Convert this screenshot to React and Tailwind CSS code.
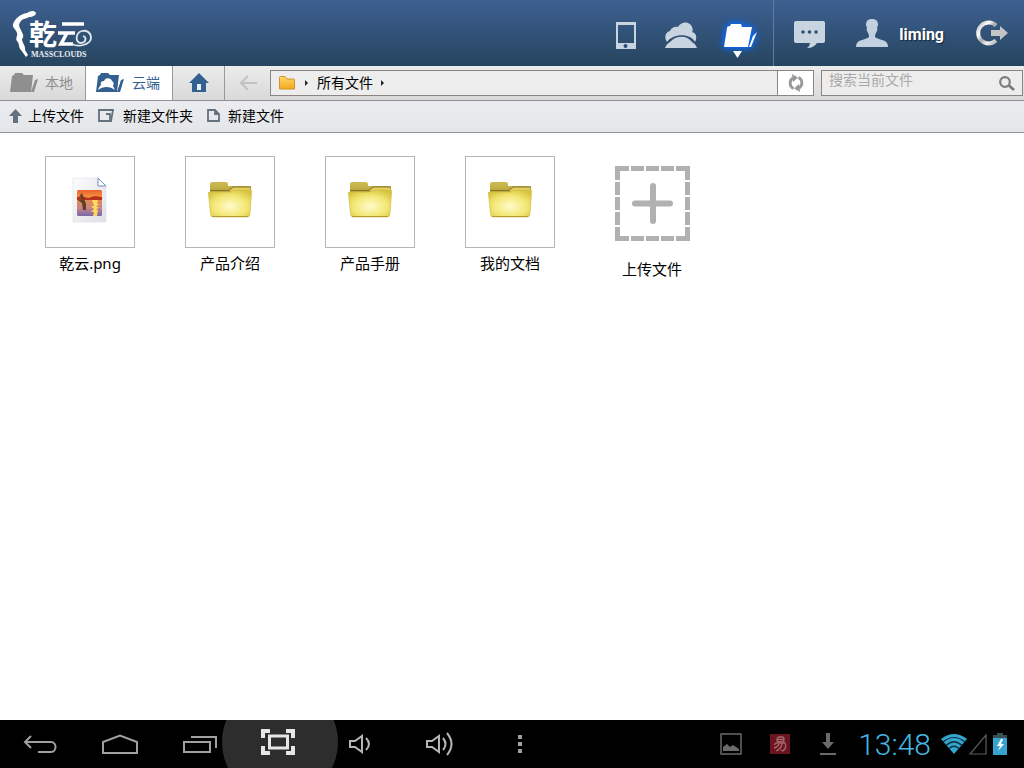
import { useState } from "react";

const files = [
  { name: "乾云.png", type: "image" },
  { name: "产品介绍", type: "folder" },
  { name: "产品手册", type: "folder" },
  { name: "我的文档", type: "folder" },
];

function Logo() {
  return (
    <svg viewBox="0 0 84 54" className="h-[54px] w-[84px] shrink-0" role="img" aria-label="乾云 MASSCLOUDS">
      <path
        d="M24 7C22 4 18 5 15 7C8 8 3 13 1 18C0 22 4 23 5 27C6 30 3 32 5 35C8 38 6 41 9 44L14 51L16 49L13 44C14 40 10 37 10 33C13 30 10 27 9 24C7 20 6 19 9 15C11 12 15 13 17 11C21 11 24 9 24 7Z"
        fill="#fff"
      />
      <text x="17" y="39" fill="#fff" fontSize="28" fontWeight="700" fontFamily="'Noto Sans CJK SC', sans-serif">
        乾
      </text>
      <path d="M50 18H72M46 27H63M55 27L49 38H61" fill="none" stroke="#fff" strokeWidth="3.600" />
      <path d="M60 38C67 42 79 38 79 32C79 26 74 24 70 25C63 27 63 37 69 37C74 37 75 31 71 30" fill="none" stroke="#dfe7ef" strokeWidth="1.800" />
      <text x="19" y="51" fill="#e8edf3" fontSize="8" fontWeight="700" fontFamily="'Liberation Serif', serif">
        MASSCLOUDS
      </text>
    </svg>
  );
}

function TabletIcon() {
  return (
    <svg viewBox="0 0 20 27" className="h-[27px] w-5">
      <path d="M0 0H20V27H0ZM2 3V21H18V3Z" fill="#c9d4e1" fillRule="evenodd" />
      <circle cx="9.5" cy="24" r="2" fill="#2d4c73" />
    </svg>
  );
}

function CloudIcon() {
  return (
    <svg viewBox="0 0 32 27" className="h-[27px] w-8">
      <path
        d="M2 20C-1 16 0 10 5 9C6 6 10 4 13 5C16-1 25-1 27 5C28 7 28 9 27 10C32 11 32 16 30 20C26 11 8 11 2 20Z"
        fill="#c9d4e1"
      />
      <path d="M0 26C1 23 3 21 5 20C11 13 22 13 27 20C29 21 31 23 32 26Z" fill="#c9d4e1" />
    </svg>
  );
}

function ActiveFolderIcon() {
  return (
    <svg viewBox="0 0 36 42" className="h-[42px] w-9 overflow-visible">
      <g className="[filter:drop-shadow(0_0_3px_#0768f5)_drop-shadow(0_0_3px_#0768f5)]">
        <path d="M1 31L4 12Q4 10 7 10L8 8H18L19 11H29L25 31Z" fill="#fff" />
        <path d="M26 31H28L34 16L30 20Z" fill="#fff" />
      </g>
      <path d="M10 35H19L14.500 42Z" fill="#fff" />
    </svg>
  );
}

function ChatIcon() {
  return (
    <svg viewBox="0 0 31 28" className="h-7 w-[31px]">
      <path d="M2 0H29Q31 0 31 2V20Q31 22 29 22H23Q20 27 13 27Q16 25 16 22H2Q0 22 0 20V2Q0 0 2 0Z" fill="#c9d4e1" />
      <circle cx="9" cy="11" r="1.8" fill="#2f5078" />
      <circle cx="15.5" cy="11" r="1.8" fill="#2f5078" />
      <circle cx="22" cy="11" r="1.8" fill="#2f5078" />
    </svg>
  );
}

function UserIcon() {
  return (
    <svg viewBox="0 0 32 28" className="h-7 w-8">
      <path
        d="M16 0C20 0 22 2 22 6L21 9Q22 10 21 12C20 14 19 15 19 18Q20 19 23 20L29 22Q32 24 32 28H0Q0 24 3 22L9 20Q12 19 13 18C13 15 12 14 11 12Q10 10 11 9L10 6C10 2 12 0 16 0Z"
        fill="#c3d0df"
      />
    </svg>
  );
}

function LogoutIcon() {
  return (
    <svg viewBox="0 0 34 26" className="h-[26px] w-[34px]">
      <defs>
        <linearGradient id="metal" x1="0" y1="0" x2="1" y2="1">
          <stop offset="0" stopColor="#b5b5b5" />
          <stop offset="0.3" stopColor="#fff" />
          <stop offset="0.5" stopColor="#a8a8a8" />
          <stop offset="0.75" stopColor="#f4f4f4" />
          <stop offset="1" stopColor="#aaa" />
        </linearGradient>
      </defs>
      <path d="M22 5.500A10.500 10.500 0 1 0 22 20.500" fill="none" stroke="url(#metal)" strokeWidth="4" />
      <path d="M17 10H26V6L34 13L26 20V16H17Z" fill="#c4c4c4" />
    </svg>
  );
}

function TabFolder({ cloud }) {
  return (
    <svg viewBox="0 0 28 20" className="h-5 w-7">
      <path d="M0 19L2 3L4 2L5 0H12L14 2H23L21 19Z" fill={cloud ? "#33608f" : "#8f8f8f"} />
      <path d="M21 19L25 7L28 6L24 19Z" fill={cloud ? "#33608f" : "#8f8f8f"} />
      {cloud && (
        <path d="M2 17C3 14 4 13 5 12C4 9 6 8 8 8C10 4 15 5 16 8C18 9 18 11 17 13L19 17C14 13 7 13 2 17Z" fill="#fff" />
      )}
    </svg>
  );
}

function HomeIcon() {
  return (
    <svg viewBox="0 0 20 20" className="h-5 w-5">
      <path d="M10 0L20 10H17V19H3V10H0Z" fill="#33608f" />
      <path d="M8 11H12V17H8Z" fill="#e8eef5" />
    </svg>
  );
}

function BackArrow() {
  return (
    <svg viewBox="0 0 18 16" className="h-4 w-[18px]" fill="none" stroke="#c2c2c2" strokeWidth="2">
      <path d="M18 8H2M9 1L2 8L9 15" />
    </svg>
  );
}

function SmallFolder() {
  return (
    <svg viewBox="0 0 16 14" className="h-3.5 w-4">
      <defs>
        <linearGradient id="small" x1="0" y1="0" x2="0" y2="1">
          <stop offset="0" stopColor="#ffd763" />
          <stop offset="1" stopColor="#f2a91f" />
        </linearGradient>
      </defs>
      <path d="M.5 13V1.500Q.5.5 1.500.5H6L8 3H15Q15.500 3 15.500 4V13Z" fill="url(#small)" stroke="#d2932a" />
    </svg>
  );
}

function Caret() {
  return (
    <svg viewBox="0 0 4 6" className="h-1.5 w-1">
      <path d="M0 0L3 3L0 6Z" fill="#222" />
    </svg>
  );
}

function RefreshIcon() {
  return (
    <svg viewBox="0 0 16 18" className="h-[18px] w-4">
      <path d="M5.500 14.500A6 6 0 0 1 5 4M10.500 3.500A6 6 0 0 1 11 14" fill="none" stroke="#999" strokeWidth="2.800" />
      <path d="M4 0L10 3.500L5 8ZM12 18L6 14.500L11 10Z" fill="#999" />
    </svg>
  );
}

function SearchIcon() {
  return (
    <svg viewBox="0 0 16 15" className="h-[15px] w-4" fill="none" stroke="#7c7c7c">
      <circle cx="6" cy="6" r="4.800" strokeWidth="2.200" />
      <path d="M10 9.500L15 14" strokeWidth="2.800" />
    </svg>
  );
}

function UploadArrow() {
  return (
    <svg viewBox="0 0 13 14" className="h-3.5 w-[13px]">
      <path d="M6.500 0L13 7H9V14H4V7H0Z" fill="#64717e" />
    </svg>
  );
}

function NewFolderIcon() {
  return (
    <svg viewBox="0 0 16 13" className="h-[13px] w-4" fill="none" stroke="#64717e" strokeWidth="1.800">
      <path d="M9 1H1V12H12V5H8M8 1H15L13 12H11" />
    </svg>
  );
}

function NewFileIcon() {
  return (
    <svg viewBox="0 0 13 13" className="h-[13px] w-[13px]" fill="none" stroke="#64717e" strokeWidth="1.800">
      <path d="M1 1H8L12 5V12H1ZM8 1V5H12" />
    </svg>
  );
}

function FolderArt() {
  return (
    <svg viewBox="0 0 44 37" className="mb-1.5 h-[37px] w-11">
      <defs>
        <radialGradient id="front" cx="0.5" cy="0.6" r="0.65">
          <stop offset="0" stopColor="#fffbcb" />
          <stop offset="0.6" stopColor="#f3e775" />
          <stop offset="1" stopColor="#d8c440" />
        </radialGradient>
        <linearGradient id="back" x1="0" y1="0" x2="0" y2="1">
          <stop offset="0" stopColor="#cfbd51" />
          <stop offset="1" stopColor="#b5a13a" />
        </linearGradient>
      </defs>
      <path d="M2 12V3Q2 1 4 1H18Q20 1 20 3V5H42Q43 5 43 7V12Z" fill="url(#back)" />
      <path d="M21 10L26 6H42V10H21Z" fill="#e4d263" />
      <path d="M2 9.500H21L25 6H43" fill="none" stroke="#86732a" strokeWidth="1" />
      <path d="M1 11H22L25 9H43Q44 9 43.500 12L42 33Q42 36 39 36H5Q3 36 2.500 33L.5 13Q0 11 1 11Z" fill="url(#front)" stroke="#cdb93f" strokeWidth="0.600" />
      <path d="M4 35.500H40" stroke="#b39d31" />
    </svg>
  );
}

function ImageArt() {
  return (
    <svg viewBox="0 0 36 46" className="mb-1 h-[46px] w-9">
      <defs>
        <linearGradient id="paper" x1="0" y1="0" x2="1" y2="1">
          <stop offset="0" stopColor="#fcfcfd" />
          <stop offset="1" stopColor="#dedfe5" />
        </linearGradient>
        <linearGradient id="sky" x1="0" y1="0" x2="0" y2="1">
          <stop offset="0" stopColor="#e8632e" />
          <stop offset="1" stopColor="#ffb347" />
        </linearGradient>
        <linearGradient id="sea" x1="0" y1="0" x2="0" y2="1">
          <stop offset="0" stopColor="#e58a4c" />
          <stop offset="0.5" stopColor="#c98682" />
          <stop offset="1" stopColor="#7a68ac" />
        </linearGradient>
      </defs>
      <path d="M1 1H26L34 9V45H1Z" fill="url(#paper)" stroke="#e3e4e8" strokeWidth="0.700" />
      <path d="M26 1V9H34Z" fill="#fff" stroke="#6e8fb8" />
      <rect x="5" y="13" width="25" height="12" rx="1.500" fill="url(#sky)" />
      <rect x="5" y="22" width="25" height="17" rx="1.500" fill="url(#sea)" />
      <path d="M5 20L10 19L16 21L23 19L30 20V23H5Z" fill="#b6301e" />
      <path d="M20 23H26L25 27H27L24 30H27L24 33H26L25 39H21L22 35H19L22 32L19 29H22Z" fill="#ffd75e" />
      <path d="M10 16L12 22L14 27V33H11L10 26L6 23L10 23L8 18Z" fill="#5d4026" />
    </svg>
  );
}

function UploadArt() {
  return (
    <svg viewBox="0 0 75 75" className="h-[75px] w-[75px]">
      <g fill="none" stroke="#b1b1b1" strokeWidth="5">
        <path d="M2.500 14V2.500H14M61 2.500H72.500V14M72.500 61V72.500H61M14 72.500H2.500V61" />
        <path d="M16 2.500H29M31 2.500H44M46 2.500H59M16 72.500H29M31 72.500H44M46 72.500H59" />
        <path d="M2.500 16V29M2.500 31V44M2.500 46V59M72.500 16V29M72.500 31V44M72.500 46V59" />
      </g>
      <path d="M38 20V55M20 37.500H55" stroke="#b1b1b1" strokeWidth="6" strokeLinecap="round" />
    </svg>
  );
}

const systemButtons = [
  {
    label: "返回",
    icon: (
      <svg viewBox="0 0 34 18" className="h-[18px] w-[34px]" fill="none" stroke="#a0a0a0" strokeWidth="2">
        <path d="M2 7H28C34 7 34 17 28 17H15M8 1L2 7L8 13" />
      </svg>
    ),
  },
  {
    label: "主页",
    icon: (
      <svg viewBox="0 0 38 20" className="h-5 w-[38px]" fill="none" stroke="#a0a0a0" strokeWidth="2">
        <path d="M2 19V8L19 1.500L36 8V19Z" />
      </svg>
    ),
  },
  {
    label: "最近任务",
    icon: (
      <svg viewBox="0 0 34 18" className="h-[18px] w-[34px]" fill="none" stroke="#a0a0a0" strokeWidth="2">
        <path d="M1 7H27V17H1ZM8 2H33V13" />
      </svg>
    ),
  },
  {
    label: "截图",
    active: true,
    icon: (
      <svg viewBox="0 0 34 28" className="mr-1 mb-1 h-7 w-[34px]" fill="none" stroke="#e6e6e6" strokeWidth="4">
        <path d="M2 10V3H9M25 3H32V10M32 18V25H25M9 25H2V18" />
        <rect x="8.500" y="8" width="18" height="12" strokeWidth="3" />
      </svg>
    ),
  },
  {
    label: "降低音量",
    icon: (
      <svg viewBox="0 0 22 20" className="h-5 w-[22px]" fill="none" stroke="#b5b5b5" strokeWidth="2">
        <path d="M1 7V13H6L13 18V2L6 7Z" />
        <path d="M17 4Q23 10 17 16" />
      </svg>
    ),
  },
  {
    label: "提高音量",
    icon: (
      <svg viewBox="0 0 28 24" className="h-6 w-7" fill="none" stroke="#b5b5b5" strokeWidth="2">
        <path d="M1 9V15H6L13 20V4L6 9Z" />
        <path d="M17 6Q22 12 17 18M21 1Q30 12 21 23" />
      </svg>
    ),
  },
  {
    label: "更多",
    icon: (
      <svg viewBox="0 0 4 18" className="h-[18px] w-1" fill="#a0a0a0">
        <path d="M0 0H4V4H0ZM0 7H4V11H0ZM0 14H4V18H0Z" />
      </svg>
    ),
  },
];

function Header() {
  return (
    <header className="flex h-[66px] items-center bg-linear-to-b from-[#3d6091] to-[#27455f] pl-3">
      <Logo />
      <nav className="ml-auto flex h-full items-center">
        <button type="button" aria-label="设备" className="mt-1 w-5">
          <TabletIcon />
        </button>
        <button type="button" aria-label="云" className="mt-1 ml-[29px]">
          <CloudIcon />
        </button>
        <button type="button" aria-label="文件" aria-current="page" className="mt-2 ml-[26px]">
          <ActiveFolderIcon />
        </button>
        <span className="ml-3.5 h-full w-px bg-[#5d7c9f]" />
        <button type="button" aria-label="消息" className="mt-1 ml-5">
          <ChatIcon />
        </button>
      </nav>
      <button
        type="button"
        className="ml-[31px] flex items-center gap-[11px] font-['Roboto',sans-serif] text-base font-bold text-white [text-shadow:1px_1px_1px_#14263c]"
      >
        <UserIcon />
        <span className="pt-1">liming</span>
      </button>
      <button type="button" aria-label="退出" className="mr-4 ml-[30px]">
        <LogoutIcon />
      </button>
    </header>
  );
}

function AddressBar({ tab, onTab }) {
  return (
    <div className="flex h-[35px] items-stretch border-b border-[#8f9297] bg-linear-to-b from-[#ececec] to-[#d9d9d9]">
      <button
        type="button"
        onClick={() => onTab("local")}
        className={`flex w-[86px] items-center gap-[7px] border-r border-[#999] pl-2.5 text-sm text-[#8f8f8f] ${
          tab === "local" ? "bg-white" : ""
        }`}
      >
        <TabFolder />
        本地
      </button>
      <button
        type="button"
        onClick={() => onTab("cloud")}
        className={`flex w-[87px] items-center gap-2 border-r border-[#999] pl-2.5 text-sm text-[#33608f] ${
          tab === "cloud" ? "bg-white" : ""
        }`}
      >
        <TabFolder cloud />
        云端
      </button>
      <button type="button" aria-label="主目录" className="grid w-[52px] place-items-center border-r border-[#999]">
        <HomeIcon />
      </button>
      <button type="button" aria-label="后退" className="grid w-[45px] place-items-center">
        <BackArrow />
      </button>
      <div className="my-1 flex flex-1 border border-[#8d8584] bg-[#ededed]">
        <div className="flex flex-1 items-center gap-2 pl-2 text-sm">
          <SmallFolder />
          <span className="flex items-center gap-2 pl-0.5">
            <Caret />
            <a href="#all">所有文件</a>
            <Caret />
          </span>
        </div>
        <button type="button" aria-label="刷新" className="grid w-9 place-items-center border-l border-[#8d8584] bg-white">
          <RefreshIcon />
        </button>
      </div>
      <form className="my-1 mr-px ml-[7px] flex w-[202px] items-center border border-[#8d8584] bg-[#ededed] pr-[7px] pl-[7px]">
        <input
          type="text"
          aria-label="搜索当前文件"
          placeholder="搜索当前文件"
          className="min-w-0 flex-1 pb-1.5 text-sm outline-none placeholder:text-[#a9a9a9]"
        />
        <button type="button" aria-label="搜索">
          <SearchIcon />
        </button>
      </form>
    </div>
  );
}

function Toolbar() {
  return (
    <div className="flex h-8 items-center gap-3.5 border-b border-[#8f9297] bg-linear-to-b from-[#ebecef] to-[#e4e6ea] pb-0.5 pl-[9px] text-sm">
      <button type="button" className="flex items-center gap-1.5">
        <UploadArrow />
        上传文件
      </button>
      <button type="button" className="flex items-center gap-[9px]">
        <NewFolderIcon />
        新建文件夹
      </button>
      <button type="button" className="flex items-center gap-2">
        <NewFileIcon />
        新建文件
      </button>
    </div>
  );
}

function FileGrid() {
  return (
    <main className="flex flex-1 flex-wrap content-start items-start pt-[23px] pl-5">
      {files.map((f) => (
        <button key={f.name} type="button" className="flex w-[140px] flex-col items-center gap-[3px] text-[15px] leading-6">
          <span className="grid h-[92px] w-[90px] place-items-center border border-[#b5b5b5] bg-white">
            {f.type === "image" ? <ImageArt /> : <FolderArt />}
          </span>
          {f.name}
        </button>
      ))}
      <button type="button" className="flex w-[140px] flex-col items-center gap-4 pt-2.5 pl-1 text-[15px] leading-6">
        <UploadArt />
        上传文件
      </button>
    </main>
  );
}

function SystemBar() {
  return (
    <footer className="flex h-12 items-center overflow-hidden bg-black">
      {systemButtons.map((b) => (
        <button key={b.label} type="button" aria-label={b.label} className="relative grid h-12 w-20 place-items-center">
          {b.active && (
            <span className="absolute -top-9 -left-[18px] h-[116px] w-[116px] rounded-full bg-[#2d2d2d]" />
          )}
          <span className="relative">{b.icon}</span>
        </button>
      ))}
      <div className="ml-auto flex items-center pr-[17px]">
        <svg viewBox="0 0 22 22" className="h-[22px] w-[22px]">
          <rect x="1" y="1" width="20" height="20" fill="none" stroke="#6a6a6a" strokeWidth="1.500" />
          <path d="M3 18V14L7 11L10 14L13 12L19 16V18Z" fill="#6a6a6a" />
        </svg>
        <span className="ml-7 grid h-5 w-5 place-items-center bg-[#6a1420]">
          <svg viewBox="0 0 14 16" className="h-4 w-3.5" fill="none" stroke="#a5686e" strokeWidth="1.300">
            <rect x="4" y="1" width="7" height="5" rx="2" />
            <path d="M4 3.500H11M1 9Q3 6 6 7H12Q14 12 10 15L8 14M6 8Q5 11 1 12M9 8Q8 13 3 15" />
          </svg>
        </span>
        <svg viewBox="0 0 16 22" className="ml-[30px] h-[22px] w-4">
          <path d="M6 0H10V9H14L8 16L2 9H6ZM0 20H16V22H0Z" fill="#6a6a6a" />
        </svg>
        <time className="ml-[22px] pt-0.5 font-['Roboto',sans-serif] text-[30px] leading-9 font-light text-[#45b6e2]">13:48</time>
        <svg viewBox="0 0 26 20" className="ml-2.5 h-5 w-[26px]">
          <path d="M0 5Q13-5 26 5L13 20Z" fill="#35a5cf" />
          <path d="M2 8Q13-1 24 8M5 11.500Q13 4 21 11.500M8 14.500Q13 10 18 14.500" fill="none" stroke="#0a2e3c" strokeWidth="1.200" />
        </svg>
        <svg viewBox="0 0 18 21" className="ml-0.5 h-[21px] w-[18px]">
          <path d="M17 1V20H1Z" fill="none" stroke="#5c5c5c" strokeWidth="1.200" />
        </svg>
        <svg viewBox="0 0 14 22" className="ml-1.5 h-[22px] w-3.5">
          <path d="M4 0H10V2H14V5H0V2H4Z" fill="#3b4e56" />
          <path d="M0 5H14V22H0Z" fill="#35a5cf" />
          <path d="M8 6L4 13H7L5 18L11 11H8L10 6Z" fill="#fff" />
        </svg>
      </div>
    </footer>
  );
}

export default function App() {
  const [tab, setTab] = useState("cloud");

  return (
    <div className="flex min-h-screen flex-col bg-white font-['Noto_Sans','Noto_Sans_CJK_SC',sans-serif] text-black">
      <Header />
      <AddressBar tab={tab} onTab={setTab} />
      <Toolbar />
      <FileGrid />
      <SystemBar />
    </div>
  );
}
